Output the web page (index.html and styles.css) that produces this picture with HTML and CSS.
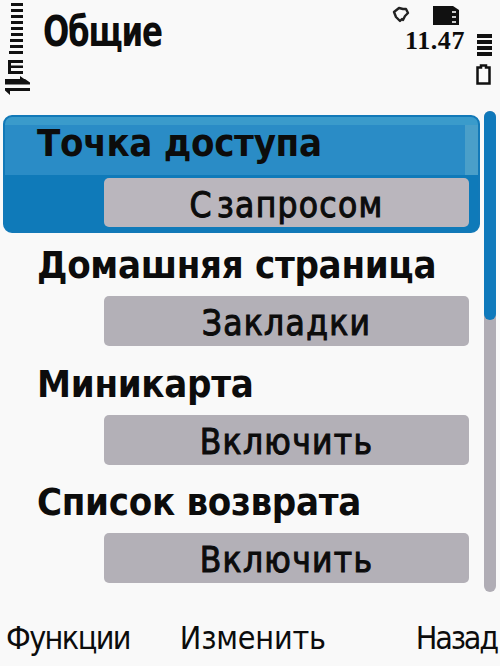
FILE: index.html
```html
<!DOCTYPE html>
<html lang="ru">
<head>
<meta charset="utf-8">
<title>Общие</title>
<link rel="stylesheet" href="styles.css">
</head>
<body>
<div class="screen">
  <header class="status">
    <svg class="signal" width="32" height="100" viewBox="0 0 32 100" aria-hidden="true">
      <g fill="#111">
        <rect x="11" y="3" width="12" height="3"/>
        <rect x="11" y="9" width="12" height="3"/>
        <rect x="11" y="15" width="12" height="3"/>
        <rect x="11" y="21" width="12" height="3"/>
        <rect x="11" y="27" width="12" height="3"/>
        <rect x="11" y="33" width="12" height="3"/>
        <rect x="10" y="39" width="13" height="3"/>
        <rect x="10" y="45" width="13" height="3"/>
        <rect x="9" y="51" width="14" height="3"/>
        <path d="M8 60h15v3h-15zM8 65.500h15v2.500h-15zM8 71h15v3h-15zM8 60h3v14h-3z"/>
        <path d="M5 79h20l5 3.500v2h-25zM20 76l7 5h-7z"/>
        <path d="M5 88h25v3h-20v4l-5-4.500z"/>
      </g>
    </svg>
    <h1 class="title">Общие</h1>
    <div class="indicators">
      <div class="top-icons">
        <svg width="18" height="18" viewBox="0 0 18 18" aria-hidden="true"><path d="M2 6l5-4 4 1 3 0 2 4-3 3-2 4-1-1-2 2-3-3-1-1z" fill="none" stroke="#222" stroke-width="2.400" stroke-linejoin="round"/></svg>
        <svg width="28" height="19" viewBox="0 0 28 19" aria-hidden="true"><path d="M1 0h20l6 4v15h-26z" fill="#111"/><g fill="#ccc"><rect x="20" y="5" width="4" height="2"/><rect x="20" y="10" width="4" height="2"/><rect x="20" y="15" width="4" height="2"/></g></svg>
      </div>
      <div class="clock-row">
        <span class="clock">11.47</span>
        <div class="battery">
          <svg width="16" height="22" viewBox="0 0 16 22" aria-hidden="true"><g fill="#111"><rect x="1" y="0" width="15" height="4"/><rect x="1" y="6" width="15" height="4"/><rect x="1" y="12" width="15" height="4"/><rect x="1" y="18" width="15" height="4"/></g></svg>
          <svg width="15" height="21" viewBox="0 0 15 21" aria-hidden="true"><path d="M5 1.500h5v2h3.500v16h-12v-16h3.500z" fill="#fbfbfb" stroke="#111" stroke-width="2.500"/></svg>
        </div>
      </div>
    </div>
  </header>

  <div class="content">
    <main class="list">
      <section class="row selected">
        <h2 class="label">Точка доступа</h2>
        <div class="value">С запросом</div>
      </section>
      <section class="row">
        <h2 class="label">Домашняя страница</h2>
        <div class="value">Закладки</div>
      </section>
      <section class="row">
        <h2 class="label">Миникарта</h2>
        <div class="value">Включить</div>
      </section>
      <section class="row">
        <h2 class="label">Список возврата</h2>
        <div class="value">Включить</div>
      </section>
    </main>
    <div class="scrollbar"><div class="thumb"></div></div>
  </div>

  <footer class="softkeys">
    <span class="key-left">Функции</span>
    <span class="key-mid">Изменить</span>
    <span class="key-right">Назад</span>
  </footer>
</div>
</body>
</html>
```

FILE: styles.css
```css
* { box-sizing: border-box; }
html, body { margin: 0; padding: 0; }
body {
  width: 500px;
  height: 666px;
  overflow: hidden;
  background: #f9f9f9;
  color: #0c0c0c;
  font-family: "DejaVu Sans", "Noto Sans", sans-serif;
  font-stretch: condensed;
}
.screen {
  width: 500px;
  height: 666px;
  display: flex;
  flex-direction: column;
}
.status {
  height: 111px;
  flex: none;
  display: flex;
  align-items: flex-start;
}
.signal { flex: none; margin-right: 11px; }
.title {
  flex: 1;
  margin: 6px 0 0;
  font-size: 43px;
  line-height: 50px;
  font-weight: 700;
  letter-spacing: -1.500px;
  transform: scaleX(0.8);
  transform-origin: left center;
}
.indicators {
  flex: none;
  width: 108px;
  display: flex;
  flex-direction: column;
  padding-top: 6px;
}
.top-icons {
  display: flex;
  gap: 22px;
  align-items: flex-start;
  height: 22px;
}
.clock-row {
  display: flex;
  justify-content: space-between;
  padding-left: 13px;
}
.clock {
  font-family: "Liberation Serif", serif;
  font-stretch: normal;
  font-size: 26px;
  line-height: 26px;
  font-weight: 700;
  letter-spacing: 0.600px;
}
.battery {
  display: flex;
  flex-direction: column;
  gap: 8px;
  margin: 6px 8px 0 0;
  align-items: flex-start;
}
.content {
  flex: none;
  height: 481px;
  display: flex;
  align-items: flex-start;
}
.list {
  margin: 4px 0 0 3px;
  width: 477px;
}
.row {
  height: 118.500px;
  padding-right: 11px;
  display: flex;
  flex-direction: column;
}
.selected {
  height: 118px;
  margin-bottom: 11px;
  padding-right: 9px;
  border-radius: 9px;
  border: 2px solid #1279b8;
  background:
    linear-gradient(#3a9bcb 0, #3a9bcb 8px, transparent 8px),
    linear-gradient(to right, transparent 460px, #4a9fc9 460px, #4a9fc9 100%) 0 0 / 100% 58px no-repeat,
    linear-gradient(#2a8cc6 0, #2a8cc6 58px, #0f7ab9 58px, #0f7ab9 100%);
}
.label {
  margin: 0;
  padding-left: 34px;
  height: 52px;
  font-size: 38px;
  line-height: 42px;
  font-weight: 700;
  letter-spacing: -0.300px;
  white-space: nowrap;
}
.selected .label { margin-top: 5px; height: 56px; padding-left: 32px; }
.value {
  margin-left: 101px;
  height: 50px;
  border-radius: 5px;
  background: #b3b0b7;
  text-align: center;
  font-size: 35px;
  line-height: 55px;
  font-weight: 400;
  -webkit-text-stroke: 1px #0c0c0c;
  letter-spacing: 1.300px;
  word-spacing: -7px;
}
.selected .value {
  margin-left: 99px;
  height: 49px;
  background: #bab6bd;
}
.scrollbar {
  flex: none;
  width: 12px;
  height: 481px;
  margin-left: 4px;
  border-radius: 6px;
  background: #b0adb5;
}
.thumb {
  height: 209px;
  border-radius: 6px;
  background: #0f79bb;
}
.softkeys {
  flex: 1;
  display: flex;
  padding: 22px 3px 0 6px;
  font-size: 32px;
  line-height: 48px;
}
.key-left { letter-spacing: -1.600px; }
.key-mid { letter-spacing: -0.200px; margin-left: 50px; }
.key-right { letter-spacing: -2.200px; margin-left: auto; }
```
